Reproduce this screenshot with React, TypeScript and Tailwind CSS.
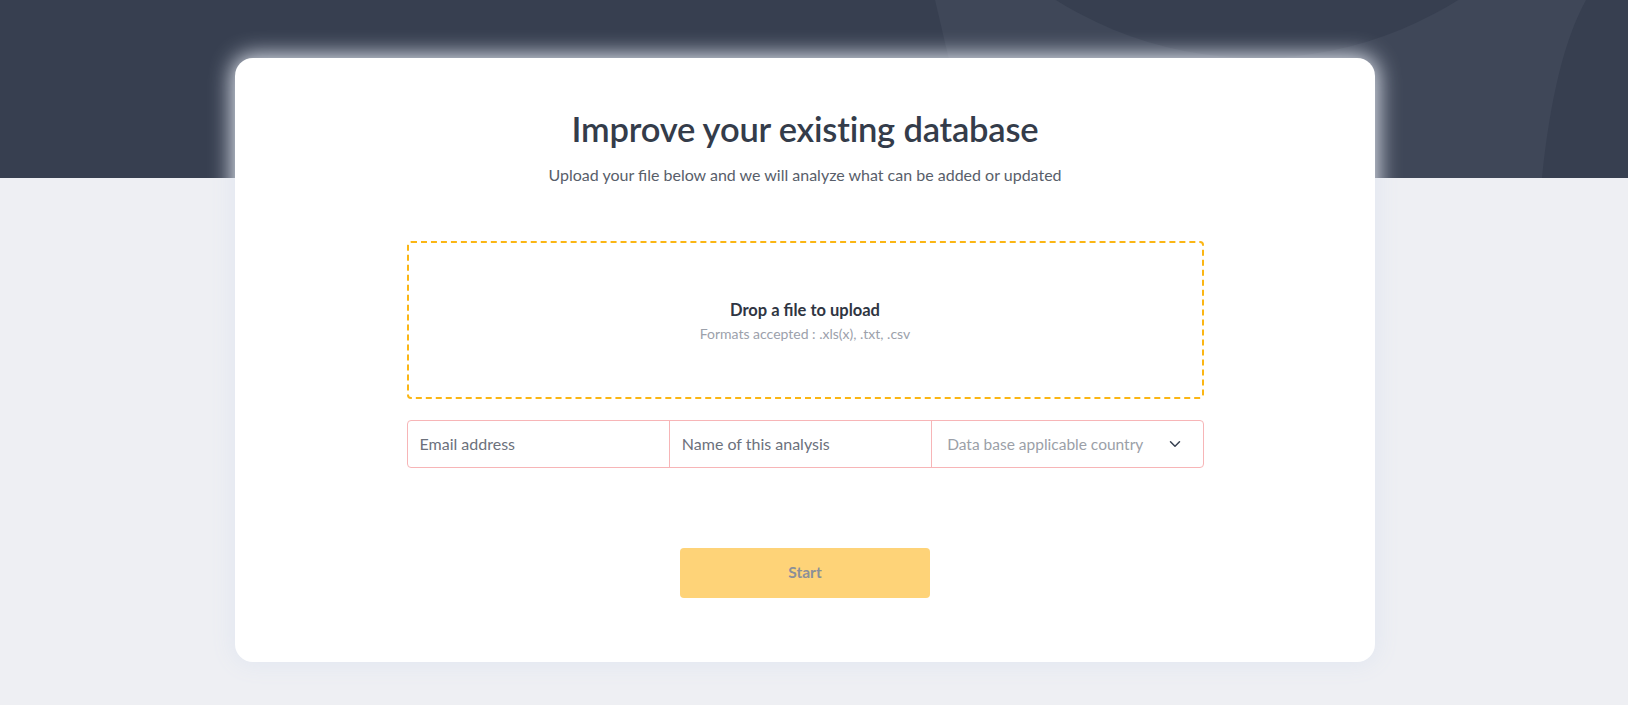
import React from "react";
import { ChevronDown } from "lucide-react";

export default function App() {
  return (
    <div className="relative w-full min-h-[705px] bg-[#eeeff3] font-['Lato',sans-serif] overflow-hidden">
      <div className="absolute left-0 top-0 w-full h-[178px] bg-[#373f50]">
        <svg className="absolute inset-0" width="1628" height="178" viewBox="0 0 1628 178">
          <path d="M935 0 C 946 45 958 110 990 178 L 1542 178 C 1550 100 1564 40 1586 0 Z" fill="#3f4758" />
          <circle cx="1257" cy="-320" r="378" fill="#373f50" />
        </svg>
      </div>
      <div className="relative pt-[58px] pb-[43px] pl-[235px] flex">
        <div className="w-[1140px] h-[604px] bg-white rounded-[18px] shadow-[0_0_22px_3px_#e2e7f1] flex flex-col items-center pt-[49px]">
          <h1 className="text-[34.5px] leading-[44px] font-semibold text-[#343c4a] tracking-[-0.2px]">
            Improve your existing database
          </h1>
          <p className="mt-[13px] text-[16px] leading-[22px] text-[#585e6a]">
            Upload your file below and we will analyze what can be added or updated
          </p>
          <div className="mt-[55px] w-[797px] h-[158px] border-2 border-dashed border-[#fbb614] rounded-[4px] flex flex-col items-center justify-center pt-[2px]">
            <div className="text-[16.5px] leading-[20px] font-bold text-[#2f3542]">Drop a file to upload</div>
            <div className="mt-[5px] text-[14px] leading-[18px] text-[#9ca1ab]">Formats accepted : .xls(x), .txt, .csv</div>
          </div>
          <div className="mt-[21px] w-[797px] h-[48px] border border-[#f7b5b7] rounded-[4px] flex">
            <div className="flex-1 flex items-center px-[12px] text-[16px] text-[#6c717c] border-r border-[#f7b5b7]">
              Email address
            </div>
            <div className="flex-1 flex items-center px-[12px] text-[16px] text-[#6c717c] border-r border-[#f7b5b7]">
              Name of this analysis
            </div>
            <div className="flex-1 flex items-center justify-between pl-[15px] pr-[18px] text-[15.5px] text-[#9b9fa8]">
              <span className="mt-[2px]">Data base applicable country</span>
              <ChevronDown size={18} strokeWidth={2} className="text-[#374151]" />
            </div>
          </div>
          <button className="mt-[80px] w-[250px] h-[50px] rounded-[4px] bg-[#fed378] text-[15.5px] font-bold text-[#8b8f98]">
            Start
          </button>
        </div>
      </div>
    </div>
  );
}
